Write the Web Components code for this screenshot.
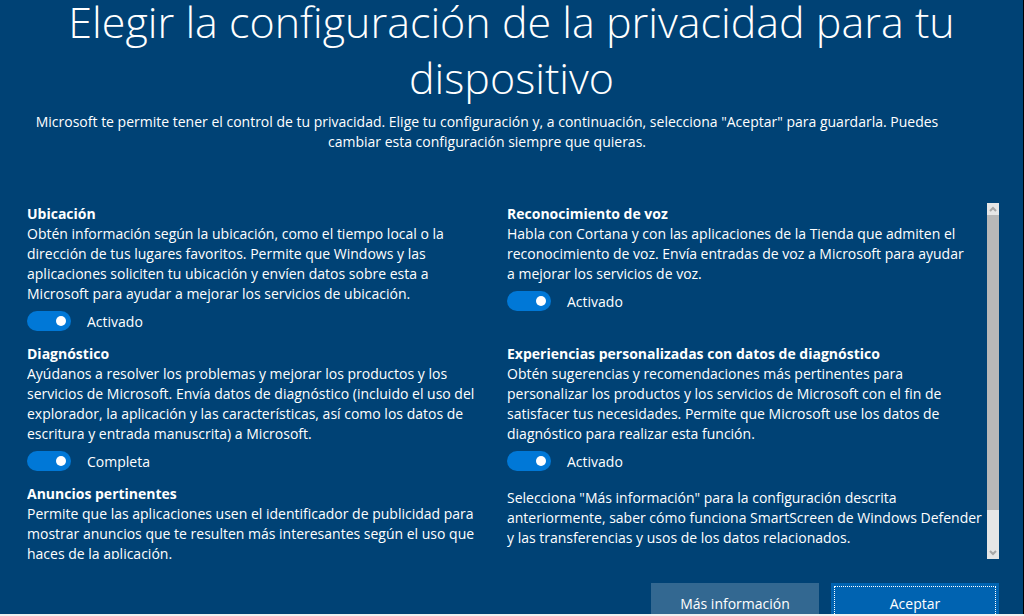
<!DOCTYPE html>
<html lang="es">
<head>
<meta charset="utf-8">
<title>Configuración de la privacidad</title>
<style>
  html, body { margin: 0; height: 100%; overflow: hidden; }
  body {
    background: #f0f0f0; color: #fff;
    font: 14px/20px "Open Sans", "Noto Sans", sans-serif;
  }
</style>
</head>
<body>
<privacy-page>
  <span slot="title">Elegir la configuración de la privacidad para tu<br>dispositivo</span>
  <span slot="intro">Microsoft te permite tener el control de tu privacidad. Elige tu configuración y, a continuación, selecciona "Aceptar" para guardarla. Puedes<br>cambiar esta configuración siempre que quieras.</span>

  <privacy-setting heading="Ubicación" state="Activado">Obtén información según la ubicación, como el tiempo local o la<br>dirección de tus lugares favoritos. Permite que Windows y las<br>aplicaciones soliciten tu ubicación y envíen datos sobre esta a<br>Microsoft para ayudar a mejorar los servicios de ubicación.</privacy-setting>
  <privacy-setting heading="Reconocimiento de voz" state="Activado">Habla con Cortana y con las aplicaciones de la Tienda que admiten el<br>reconocimiento de voz. Envía entradas de voz a Microsoft para ayudar<br>a mejorar los servicios de voz.</privacy-setting>
  <privacy-setting heading="Diagnóstico" state="Completa">Ayúdanos a resolver los problemas y mejorar los productos y los<br>servicios de Microsoft. Envía datos de diagnóstico (incluido el uso del<br>explorador, la aplicación y las características, así como los datos de<br>escritura y entrada manuscrita) a Microsoft.</privacy-setting>
  <privacy-setting heading="Experiencias personalizadas con datos de diagnóstico" state="Activado">Obtén sugerencias y recomendaciones más pertinentes para<br>personalizar los productos y los servicios de Microsoft con el fin de<br>satisfacer tus necesidades. Permite que Microsoft use los datos de<br>diagnóstico para realizar esta función.</privacy-setting>
  <privacy-setting heading="Anuncios pertinentes">Permite que las aplicaciones usen el identificador de publicidad para<br>mostrar anuncios que te resulten más interesantes según el uso que<br>haces de la aplicación.</privacy-setting>
  <privacy-note>Selecciona "Más información" para la configuración descrita<br>anteriormente, saber cómo funciona SmartScreen de Windows Defender<br>y las transferencias y usos de los datos relacionados.</privacy-note>

  <action-button slot="actions">Más información</action-button>
  <action-button slot="actions" primary>Aceptar</action-button>
</privacy-page>

<script>
  const define = (name, html, setup) => customElements.define(name, class extends HTMLElement {
    constructor() {
      super();
      this.attachShadow({ mode: 'open' }).innerHTML = html;
    }
    connectedCallback() { if (setup) setup(this, this.shadowRoot); }
  });

  define('privacy-page', `
    <style>
      :host {
        display: flex; flex-direction: column; box-sizing: border-box;
        height: calc(100vh - 2px); overflow: hidden;
        background: #004275; border-right: 1px solid #000;
      }
      header { flex: none; text-align: center; white-space: nowrap; }
      h1 { margin: -6px 0 0; font-size: 43px; line-height: 56px; font-weight: 300; }
      p { margin: 6px 76px 0 27px; display: flex; justify-content: center; }
      main { flex: 1; min-height: 0; display: flex; margin: 51px 24px 24px 27px; }
      section {
        flex: 1; min-width: 0; overflow-y: auto; scrollbar-width: none;
        display: grid; grid-template-columns: 1fr 1fr; grid-auto-rows: min-content;
        row-gap: 12px; padding-top: 1px;
      }
      footer {
        flex: none; display: flex; justify-content: flex-end; gap: 12px;
        margin: 0 24px -11px 0;
      }
    </style>
    <header>
      <h1><slot name="title"></slot></h1>
      <p><slot name="intro"></slot></p>
    </header>
    <main>
      <section><slot></slot></section>
      <scroll-rail></scroll-rail>
    </main>
    <footer><slot name="actions"></slot></footer>`);

  define('privacy-setting', `
    <style>
      :host { display: block; white-space: nowrap; }
      h2 { margin: 0; font-size: 14px; line-height: 20px; font-weight: 700; }
      p { margin: 0; }
      toggle-switch { margin-top: 7px; }
    </style>
    <h2></h2>
    <p><slot></slot></p>`, (host, root) => {
      root.querySelector('h2').textContent = host.getAttribute('heading');
      if (host.hasAttribute('state') && !root.querySelector('toggle-switch')) {
        const toggle = document.createElement('toggle-switch');
        toggle.textContent = host.getAttribute('state');
        root.append(toggle);
      }
    });

  define('toggle-switch', `
    <style>
      :host { display: block; }
      label { display: flex; align-items: flex-start; gap: 16px; }
      span { padding-top: 1px; }
      input {
        appearance: none; box-sizing: border-box; margin: 0; padding: 0 5px;
        width: 44px; height: 20px; border-radius: 10px; background: #5c7c98;
        display: flex; align-items: center;
      }
      input::before { content: ""; width: 10px; height: 10px; border-radius: 50%; background: #fff; }
      input:checked { background: #0078d7; justify-content: flex-end; }
    </style>
    <label for="t"><input id="t" type="checkbox" role="switch" checked><span><slot></slot></span></label>`);

  define('privacy-note', `
    <style>
      :host { display: block; white-space: nowrap; padding-top: 4px; }
      p { margin: 0; }
    </style>
    <p><slot></slot></p>`);

  define('scroll-rail', `
    <style>
      :host { flex: none; width: 12px; display: flex; flex-direction: column; background: #e6e6e6; }
      svg { display: block; flex: none; width: 12px; height: 12px; fill: none; stroke: #a6a6a6; stroke-width: 2; }
      .track { flex: 1; }
      .thumb { height: 89%; background: #b8b8b8; }
    </style>
    <svg viewBox="0 0 12 12"><path d="M3 8l3-3 3 3"/></svg>
    <div class="track"><div class="thumb"></div></div>
    <svg viewBox="0 0 12 12"><path d="M3 4l3 3 3-3"/></svg>`);

  define('action-button', `
    <style>
      :host { display: block; width: 168px; }
      button {
        display: block; width: 100%; height: 42px; padding: 0; border: 0;
        font: inherit; color: inherit; background: #336891;
      }
      :host([primary]) button {
        background: #0063b1; outline: 1px dotted #fff; outline-offset: -4px;
      }
    </style>
    <button type="button"><slot></slot></button>`);
</script>
</body>
</html>
